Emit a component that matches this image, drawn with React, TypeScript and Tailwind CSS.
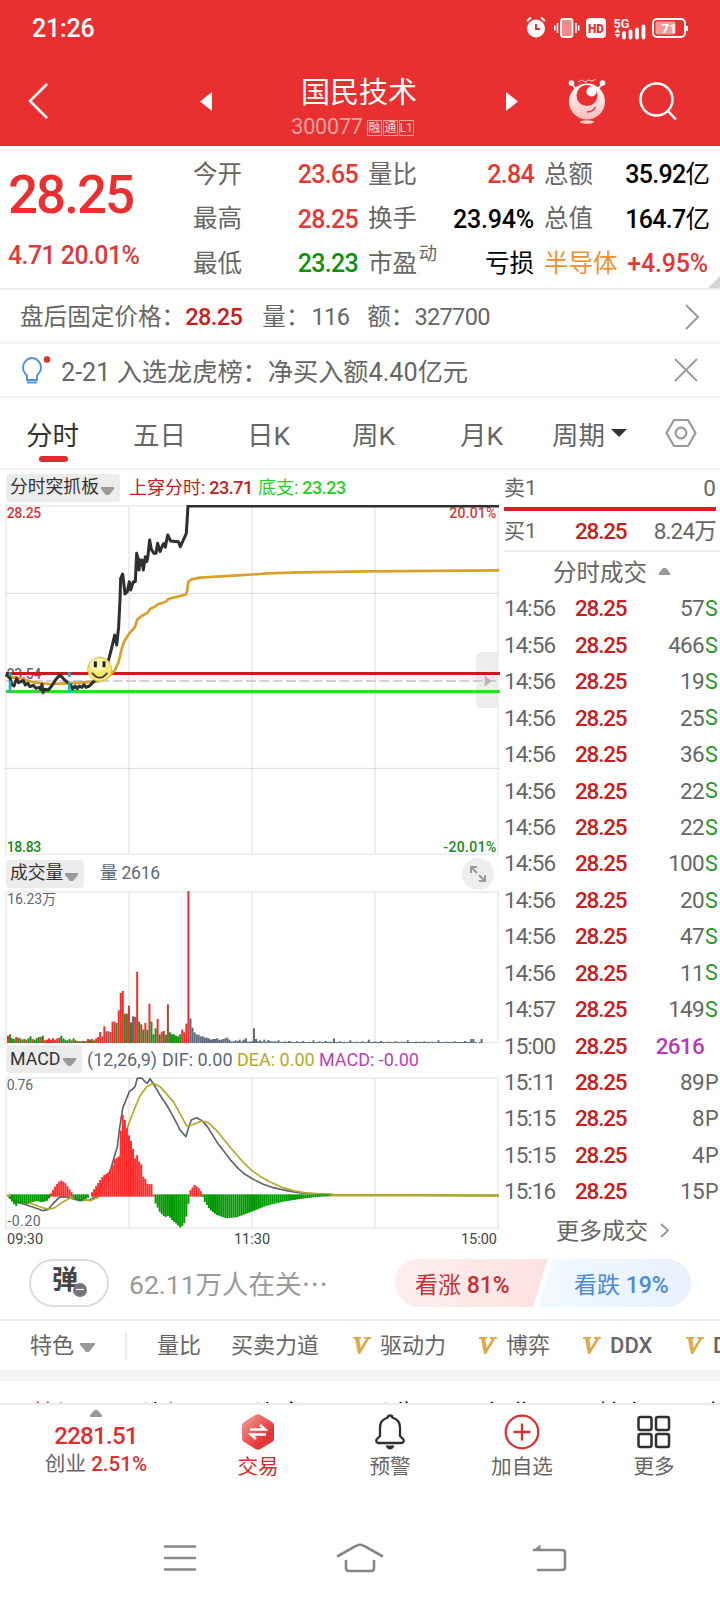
import type { ReactNode } from 'react'
import clsx from 'clsx'

type Point = [number, number]

interface Quote {
    label: string
    value: string
    unit?: string
    valueClass: string
    labelClass?: string
    sup?: string
}

interface Trade {
    time: string
    volume: string
    side: string
}

const quoteColumns: Quote[][] = [
    [
        { label: '今开', value: '23.65', valueClass: 'text-[#e23838]' },
        { label: '最高', value: '28.25', valueClass: 'text-[#e23838]' },
        { label: '最低', value: '23.23', valueClass: 'text-[#0c930c]' },
    ],
    [
        { label: '量比', value: '2.84', valueClass: 'text-[#e23838]' },
        { label: '换手', value: '23.94%', valueClass: 'text-black' },
        { label: '市盈', value: '', unit: '亏损', valueClass: 'text-black', sup: '动' },
    ],
    [
        { label: '总额', value: '35.92', unit: '亿', valueClass: 'text-black' },
        { label: '总值', value: '164.7', unit: '亿', valueClass: 'text-black' },
        { label: '半导体', value: '+4.95%', valueClass: 'text-[#e23838] pr-0.5', labelClass: 'text-[#f0902c]' },
    ],
]

const trades: Trade[] = [
    { time: '14:56', volume: '57', side: 'S' },
    { time: '14:56', volume: '466', side: 'S' },
    { time: '14:56', volume: '19', side: 'S' },
    { time: '14:56', volume: '25', side: 'S' },
    { time: '14:56', volume: '36', side: 'S' },
    { time: '14:56', volume: '22', side: 'S' },
    { time: '14:56', volume: '22', side: 'S' },
    { time: '14:56', volume: '100', side: 'S' },
    { time: '14:56', volume: '20', side: 'S' },
    { time: '14:56', volume: '47', side: 'S' },
    { time: '14:56', volume: '11', side: 'S' },
    { time: '14:57', volume: '149', side: 'S' },
    { time: '15:00', volume: '2616', side: '' },
    { time: '15:11', volume: '89', side: 'P' },
    { time: '15:15', volume: '8', side: 'P' },
    { time: '15:15', volume: '4', side: 'P' },
    { time: '15:16', volume: '15', side: 'P' },
]

// Charts are drawn in units of a third of a pixel
const PRICE_LINE = '18,560 24,550 30,565 36,585 42,588 50,565 56,578 70,572 76,585 84,580 90,590 100,586 108,595 118,592 122,598 126,583 129,608 135,598 145,600 155,588 168,568 180,555 192,568 200,575 212,585 218,597 225,588 232,596 238,588 246,592 252,584 258,592 268,588 276,580 284,572 292,560 300,505 310,530 325,512 334,478 344,435 350,465 356,410 360,330 362,265 368,252 372,285 375,312 382,305 388,275 392,300 400,275 406,275 410,190 414,205 417,240 420,210 424,225 426,210 430,240 436,200 440,215 443,205 449,150 454,178 462,190 468,190 473,160 480,185 488,165 492,160 496,172 503,135 512,153 535,155 541,170 550,150 559,130 564,48 1497,48'
const AVERAGE_LINE = '18,558 60,565 100,577 150,582 200,580 240,578 290,575 320,565 345,540 356,515 364,480 372,455 388,430 404,412 412,388 425,378 443,368 450,357 465,350 473,343 498,335 505,327 545,317 558,313 562,300 565,275 575,268 600,263 700,257 780,252 800,250 900,247 1100,244 1497,241'
const DIF_LINE = '24,468 45,485 70,492 100,502 130,512 145,508 160,490 178,472 195,470 215,475 240,482 270,480 290,468 310,425 330,395 340,360 352,320 358,270 368,205 388,155 400,145 405,140 412,115 425,114 432,122 442,130 450,116 458,128 480,165 500,195 520,230 540,270 558,290 566,262 574,240 590,233 606,242 622,260 650,305 690,358 715,386 735,403 760,418 790,433 820,443 860,452 900,459 1000,464 1497,467'
const DEA_LINE = '24,467 60,487 95,491 130,504 150,507 165,503 185,488 215,472 240,478 270,482 295,472 320,430 350,390 370,310 384,258 400,215 420,168 440,140 460,130 480,140 520,185 545,230 560,258 575,255 605,243 625,248 650,272 700,333 730,367 755,391 780,409 810,426 850,443 880,452 920,459 1000,464 1497,467'

const VOLUMES = '22r 26g 14g 12g 18r 16g 14r 10g 12g 10r 14g 20g 12r 10g 15g 18g 18r 22g 8r 10r 14r 10r 14r 10r 14r 16r 22g 14g 10g 8g 12g 8r 14g 8g 6r 5g 6r 6g 6r 12r 10g 12r 8g 14r 18r 33r 20r 50r 35r 35s 33r 64r 64r 60g 98r 150r 156r 88g 88d 112r 62g 80s 78r 214r 64g 56r 40g 60r 40g 118r 64g 26g 44g 72r 26g 34r 36d 25g 116d 32g 26g 26g 22g 20g 26g 40r 32r 58r 456r 74s 46s 32s 26s 24s 20s 20s 16s 16s 14s 10s 12s 12s 14s 10s 10s 12s 14s 16s 10s 5s 5s 8s 6s 10s 5s 10s 14s 4s 4s 5s 44s 12s 5s 8s 4s 10s 4s 9s 6s 4s 5s 4s 8s 3s 3s 5s 3s 6s 4s 3s 3s 5s 3s 3s 6s 3s 3s 4s 3s 8s 3s 3s 5s 3s 3s 6s 3s 4s 3s 14s 3s 3s 5s 3s 4s 3s 3s 8s 3s 3s 4s 3s 3s 5s 3s 3s 10s 3s 3s 4s 3s 3s 6s 3s 3s 3s 4s 3s 3s 5s 3s 3s 4s 3s 3s 8s 3s 3s 3s 4s 3s 3s 3s 5s 3s 3s 3s 4s 3s 3s 8s 3s 3s 3s 4s 3s 3s 3s 5s 3s 3s 3s 3s 6s 3s 3s 12s 12s 3s 0s 3s 12s'.split(' ')

const BAR_COLORS: Record<string, string> = { r: '#f02f2f', g: '#169416', s: '#5b6b7b', d: '#a8483c' }

const MACD_ENVELOPE: Point[] = [
    [24, 0], [30, -10], [48, -32], [56, -22], [80, -24], [110, -16], [125, -20], [145, -14], [150, 0],
    [155, 10], [168, 30], [182, 46], [195, 38], [206, 22], [218, 5], [222, -10], [240, -16], [262, -8], [270, 0],
    [278, 12], [290, 30], [310, 60], [325, 68], [340, 95], [344, 110], [356, 115], [360, 170], [367, 245],
    [375, 225], [384, 188], [396, 155], [405, 110], [410, 125], [418, 100], [426, 90], [430, 55], [440, 45],
    [445, 20], [450, 40], [457, 30], [461, 0], [466, -22], [480, -50], [495, -65], [505, -60], [515, -72],
    [530, -85], [542, -97], [555, -80], [562, -50], [567, -10], [570, 14], [584, 32], [600, 18], [607, 0],
    [612, -15], [630, -42], [650, -58], [680, -68], [710, -65], [750, -50], [800, -30], [850, -18], [900, -10],
    [950, -4], [1000, -1], [1500, 0],
]

const macdAt = (x: number) => {
    const i = MACD_ENVELOPE.findIndex((p) => p[0] > x)
    if (i < 1) return 0
    const [x0, y0] = MACD_ENVELOPE[i - 1]
    const [x1, y1] = MACD_ENVELOPE[i]
    return y0 + ((y1 - y0) * (x - x0)) / (x1 - x0)
}

const macdBars: Point[] = Array.from({ length: 160 }, (_, i): Point => [24 + i * 6.15, macdAt(24 + i * 6.15)])

function Grid({ top, bottom, rows = [] }: { top: number; bottom: number; rows?: number[] }) {
    return (
        <g>
            <g stroke="#ebebeb" strokeWidth="5" fill="none">
                <rect x="18" y={top} width="1476" height={bottom - top} />
                {[387, 756, 1125].map((x) => <path key={x} d={`M${x} ${top}V${bottom}`} />)}
            </g>
            {rows.map((y) => <path key={y} d={`M18 ${y}H1494`} stroke="#d8d8d8" strokeWidth="3" />)}
        </g>
    )
}

function PriceChart() {
    return (
        <svg className="block h-[350px] w-[500px]" viewBox="0 45 1500 1050" fill="none">
            <Grid top={48} bottom={1093} rows={[310, 835]} />
            <path d="M1494 486h-48q-18 0-18 18v132q0 18 18 18h48z" fill="#eeeeee" />
            <g fontSize="42" fontFamily="Roboto" fontWeight="500">
                <text x="20" y="84" fill="#d23a3a" textLength="104">28.25</text>
                <text x="1348" y="84" fill="#d23a3a" textLength="141">20.01%</text>
                <text x="20" y="1087" fill="#1b8a1b" textLength="104">18.83</text>
                <text x="1330" y="1087" fill="#1b8a1b" textLength="159">-20.01%</text>
                <text x="20" y="566" fill="#5b6878" textLength="104">23.54</text>
            </g>
            <path d="M18 573H1494" stroke="#c4c4c4" strokeWidth="5" strokeDasharray="30 10" />
            <path d="M1454 556l20 17-20 17z" fill="#b5b5b5" />
            <path d="M18 550.500H1500" stroke="#c9191e" strokeWidth="9" />
            <path d="M18 604.500H1500" stroke="#2edc2e" strokeWidth="9" />
            <polyline points={AVERAGE_LINE} stroke="#dba02c" strokeWidth="8" strokeLinejoin="round" />
            <polyline points={PRICE_LINE} stroke="#2f2f2f" strokeWidth="9" strokeLinejoin="round" />
            <path d="M30 547v12M30 572v36M208 547v14M208 575v33" stroke="#2ab3b3" strokeWidth="8" />
            <circle cx="299" cy="538" r="36" fill="#f7e96a" stroke="#d8bf4e" strokeWidth="3" />
            <ellipse cx="296" cy="524" rx="26" ry="19" fill="#fdf7b4" />
            <path d="M286 514v18M312 514v18" stroke="#222" strokeWidth="9" />
            <path d="M276 548q23 30 46 0" stroke="#333" strokeWidth="5" />
        </svg>
    )
}

function VolumeChart() {
    return (
        <svg className="block h-[154px] w-[500px]" viewBox="0 180 1500 462">
            <Grid top={186} bottom={638} />
            {VOLUMES.map((bar, i) => {
                const h = parseInt(bar, 10)
                return <rect key={i} x={21 + i * 6.15} y={639 - h} width="6" height={h} fill={BAR_COLORS[bar.slice(-1)]} />
            })}
            <text x="22" y="223" fontSize="42" fontFamily="Roboto, 'Noto Sans CJK SC'" fill="#5b6878" textLength="146">16.23万</text>
        </svg>
    )
}

function MacdChart() {
    return (
        <svg className="block h-[154px] w-[500px]" viewBox="0 108 1500 462" fill="none">
            <Grid top={114} bottom={564} />
            <polyline points={DIF_LINE} stroke="#5d6670" strokeWidth="5" strokeLinejoin="round" />
            <polyline points={DEA_LINE} stroke="#b3a92b" strokeWidth="5" strokeLinejoin="round" />
            {macdBars.map(([x, h]) => (
                <rect
                    key={x}
                    x={x - 3}
                    y={h > 0 ? 466 - h : 463}
                    width="6"
                    height={Math.abs(h) + 4}
                    fill={h > 0 ? '#ff2a2a' : '#009a00'}
                    opacity={Math.abs(h) < 0.8 ? 0 : 1}
                />
            ))}
            <path d="M20 467H32M990 466H1497" stroke="#b3a92b" strokeWidth="7" />
            <g fontSize="42" fontFamily="Roboto" fill="#5b6878">
                <text x="20" y="150" textLength="79">0.76</text>
                <text x="22" y="558" textLength="100">-0.20</text>
            </g>
        </svg>
    )
}

function Pill({ children, className }: { children: ReactNode; className?: string }) {
    return (
        <div className={clsx('flex h-7 items-center justify-between rounded bg-[#ececec] pr-1.5 pl-1 text-[17.8px] text-[#333]', className)}>
            {children}
            <svg className="mt-1.5 h-2 w-[13px]" viewBox="0 0 13 8"><path d="M0 0h13v2L8 8H5L0 2z" fill="#9a9a9a" /></svg>
        </div>
    )
}

function StatusBar() {
    return (
        <div className="flex h-[58px] items-center justify-between pr-8 pl-8">
            <span className="text-[25px] font-medium tracking-[-0.2px]">21:26</span>
            <svg className="-mt-0.5" width="162" height="24" viewBox="0 0 162 24" fill="none">
                <circle cx="10" cy="12.500" r="9" fill="#fff" />
                <path d="M1 5l4-3.500M19 5l-4-3.500" stroke="#fff" strokeWidth="2" />
                <path d="M10 8v5h4" stroke="#e83030" strokeWidth="2" />
                <rect x="35" y="3" width="11.500" height="18" rx="2.500" fill="#f58a8a" stroke="#fff" strokeWidth="1.800" />
                <path d="M31.500 7v10M28.800 9.500v5M50 7v10M52.700 9.500v5" stroke="#fff" strokeWidth="1.600" />
                <rect x="60" y="2" width="20" height="20" rx="4" fill="#fff" />
                <text x="62" y="17" fontSize="13" fontWeight="900" fill="#e83030" fontFamily="Roboto" textLength="16" lengthAdjust="spacingAndGlyphs">HD</text>
                <text x="87.500" y="11.500" fontSize="13" fontWeight="600" fill="#fff" fontFamily="Roboto" textLength="16" lengthAdjust="spacingAndGlyphs">5G</text>
                <path d="M91.500 12.500l3 4h-6zM91.500 22l3-4h-6z" fill="#fff" />
                <path d="M98 17v4.500M104.500 15.500v6M111 13.500v8M117.500 10.500v11" stroke="#fff" strokeWidth="3.800" strokeLinecap="round" />
                <rect x="127" y="3" width="32" height="18" rx="4" stroke="#fff" strokeWidth="2" />
                <rect x="129.500" y="5.500" width="20" height="13" rx="2" fill="#f69a9a" />
                <path d="M161 10v5" stroke="#fff" strokeWidth="2" />
                <text x="135.500" y="17" fontSize="13.500" fontWeight="800" fill="#fff" fontFamily="Roboto">71</text>
            </svg>
        </div>
    )
}

function Header() {
    return (
        <header className="h-[146px] bg-[#e83030] text-white">
            <StatusBar />
            <div className="flex h-[86px] items-center">
                <svg className="ml-7 h-9 w-5" viewBox="0 0 20 36" fill="none"><path d="M19 1L2 18l17 17" stroke="#fff" strokeWidth="2.500" /></svg>
                <svg className="ml-[152px] h-[19px] w-3" viewBox="0 0 12 19"><path d="M12 0v19L0 9.500z" fill="#fff" /></svg>
                <div className="flex w-[294px] flex-col items-center self-start pt-4">
                    <div className="h-[38px] text-[29px] leading-[38px]">国民技术</div>
                    <div className="mt-[3px] mr-[13px] flex h-6 items-center text-[21.5px] leading-6 tracking-[-0.2px] text-[#f7a0a0]">
                        <span>300077</span>
                        <span className="mt-0.5 ml-1 flex gap-px text-[12px] leading-[14px] text-[#fdd]">
                            {['融', '通', 'L1'].map((tag) => (
                                <span key={tag} className="h-4 w-[15px] border border-[#f7a0a0] text-center">{tag}</span>
                            ))}
                        </span>
                    </div>
                </div>
                <svg className="h-[19px] w-3" viewBox="0 0 12 19"><path d="M0 0v19l12-9.500z" fill="#fff" /></svg>
                <svg className="ml-[50px] h-[46px] w-[38px]" viewBox="0 0 38 46" fill="none">
                    <defs>
                        <linearGradient id="mascot" x1="0" y1="0" x2="0" y2="1">
                            <stop offset="0" stopColor="#fff" />
                            <stop offset="1" stopColor="#fbb" />
                        </linearGradient>
                    </defs>
                    <path d="M3 5l5 6M35 5l-5 6" stroke="#fff" strokeWidth="1.800" />
                    <circle cx="3.500" cy="5" r="2.800" fill="#fff" />
                    <circle cx="34.500" cy="5" r="2.800" fill="#fff" />
                    <path d="M10 4l4-2 3 2 4-2 3 1 4-2" stroke="#fcc" strokeWidth="1" />
                    <ellipse cx="19" cy="23.500" rx="18" ry="18" fill="url(#mascot)" />
                    <circle cx="19" cy="17.500" r="10.500" fill="#e83030" />
                    <circle cx="23.500" cy="13.500" r="5" fill="#fff" />
                    <path d="M19 34q6 0 8.500-5" stroke="#e83030" strokeWidth="1.500" />
                    <ellipse cx="19" cy="44" rx="7" ry="1.800" fill="#fcc" />
                </svg>
                <svg className="ml-[33px] h-[38px] w-[38px]" viewBox="0 0 38 38" fill="none">
                    <circle cx="17.500" cy="17.500" r="16" stroke="#fff" strokeWidth="2.500" />
                    <path d="M28.500 28.500l8.500 9" stroke="#fff" strokeWidth="2.500" />
                </svg>
            </div>
        </header>
    )
}

function QuotePanel() {
    return (
        <section className="relative flex h-[144px] border-b-2 border-[#ececec]">
            <div className="w-[193px] pl-[8px] text-[#e83030]">
                <div className="mt-[19px] h-[60px] text-[53px] leading-[60px] font-medium tracking-[-2px]">28.25</div>
                <div className="mt-[15px] text-[25px] leading-8 font-medium tracking-[-0.6px] text-[#dc3a3a]">4.71 20.01%</div>
            </div>
            <div className="grid grid-cols-[165px_166px_166px] gap-x-[10px]">
                {quoteColumns.map((column, i) => (
                    <div key={i} className="pt-[7px]">
                        {column.map((item) => (
                            <div key={item.label} className="flex h-[44.500px] items-center justify-between text-[24.5px]">
                                <span className={clsx('whitespace-nowrap', item.labelClass || 'text-[#666]')}>
                                    {item.label}
                                    {item.sup && <sup className="-top-3 ml-0.5 text-[18px]">{item.sup}</sup>}
                                </span>
                                <span className={clsx('whitespace-nowrap', item.valueClass)}>
                                    <span className={clsx('text-[25px] font-medium', item.value.endsWith('%') ? 'tracking-[-0.2px]' : 'tracking-[-0.7px]')}>{item.value}</span>
                                    {item.unit}
                                </span>
                            </div>
                        ))}
                    </div>
                ))}
            </div>
            <svg className="absolute right-0 bottom-0 h-3 w-3" viewBox="0 0 12 12"><path d="M12 0v12H0z" fill="#d5d5d5" /></svg>
        </section>
    )
}

function NoticeRows() {
    return (
        <>
            <div className="flex h-[54px] items-center border-b-2 border-[#f3f3f3] pt-1 pr-5 pl-5 text-[23.6px] text-[#666]">
                <span>盘后固定价格：</span>
                <span className="font-medium tracking-[-0.6px] text-[#c8201e]">28.25</span>
                <span className="ml-[20px]">量：</span>
                <span className="ml-0.5 tracking-[-0.7px]">116</span>
                <span className="ml-[18px]">额：</span>
                <span className="tracking-[-0.7px]">327700</span>
                <svg className="-mt-0.5 ml-auto h-[26px] w-[15px]" viewBox="0 0 15 26" fill="none"><path d="M1 1l12 12L1 25" stroke="#999" strokeWidth="2" /></svg>
            </div>
            <div className="flex h-[54px] items-center border-b-2 border-[#f3f3f3] pr-[22px] pl-[22px] text-[25.2px] text-[#666]">
                <svg className="h-[30px] w-[30px]" viewBox="0 0 30 30" fill="none">
                    <path d="M5 20.500C2.500 18 1 15.500 1 12.500a9 9.500 0 0118 0c0 3-1.500 5.500-4 8V25H5z" stroke="#4a8fdc" strokeWidth="1.800" />
                    <path d="M5 27.500h10" stroke="#4a8fdc" strokeWidth="1.800" />
                    <circle cx="25" cy="4.500" r="3.300" fill="#d93030" />
                </svg>
                <span className="mt-1.5 ml-[9px] whitespace-nowrap">2-21 入选龙虎榜：净买入额4.40亿元</span>
                <svg className="ml-auto h-6 w-6" viewBox="0 0 24 24" fill="none"><path d="M1 1l22 22M23 1L1 23" stroke="#999" strokeWidth="1.800" /></svg>
            </div>
        </>
    )
}

function ChartTabs() {
    return (
        <nav className="flex h-[72px] items-center border-b-2 border-[#f3f3f3] pt-1.5 pl-[26px] text-[26.5px] text-[#666]">
            <div className="relative w-[107px] text-[#333]">
                分时
                <span className="absolute -bottom-[6px] left-[13px] h-1.5 w-[29px] rounded-full bg-[#d93030]" />
            </div>
            <span className="w-[114px]">五日</span>
            <span className="w-[105px]">日K</span>
            <span className="w-[108px]">周K</span>
            <span className="w-[92px]">月K</span>
            <span>周期</span>
            <svg className="-mt-1.5 ml-[6px] h-2 w-4" viewBox="0 0 16 8"><path d="M0 0h16L8 8z" fill="#333" /></svg>
            <svg className="-mt-1.5 ml-[38px] h-[30px] w-8" viewBox="0 0 32 30" fill="none" stroke="#999" strokeWidth="2.200">
                <path d="M9 2h14l7.500 13L23 28H9L1.500 15z" strokeLinejoin="round" />
                <circle cx="16" cy="15" r="5.300" />
            </svg>
        </nav>
    )
}

function ChartColumn() {
    return (
        <div className="w-[500px]">
            <div className="flex h-[35px] items-center pl-1.5 text-[18px]">
                <Pill className="w-[114px]">分时突抓板</Pill>
                <span className="ml-[9px] w-[129px] whitespace-nowrap text-[#c02020]">上穿分时:<b className="ml-1 font-medium tracking-[-0.5px]">23.71</b></span>
                <span className="text-[#23d023]">底支:<b className="ml-1 font-medium tracking-[-0.5px]">23.23</b></span>
            </div>
            <PriceChart />
            <div className="flex h-[35px] items-center pt-0.5 pr-[6px] pl-1.5">
                <Pill className="w-[78px]">成交量</Pill>
                <span className="ml-4 text-[17.5px] tracking-[-0.2px] text-[#5b6878]">量 2616</span>
                <svg className="ml-auto h-8 w-8" viewBox="0 0 32 32" fill="none">
                    <circle cx="16" cy="16" r="16" fill="#eee" />
                    <path d="M9 15V9h6M9 9l6 6M23 17v6h-6M23 23l-6-6" stroke="#999" strokeWidth="2" />
                </svg>
            </div>
            <VolumeChart />
            <div className="flex h-8 items-center pb-0.5 pl-1.5 text-[18px]">
                <Pill className="w-[76px]">MACD</Pill>
                <span className="ml-[5px] w-[75px] text-[#5b6878]">(12,26,9)</span>
                <span className="w-[75px] text-[#5b6878]">DIF: 0.00</span>
                <span className="w-[82px] text-[#b3a92b]">DEA: 0.00</span>
                <span className="text-[#bb3fbb]">MACD: -0.00</span>
            </div>
            <MacdChart />
            <div className="flex h-[18px] items-center justify-between pt-0.5 pr-[3px] pl-[7px] text-[14.5px] text-[#444]">
                <span>09:30</span>
                <span>11:30</span>
                <span>15:00</span>
            </div>
        </div>
    )
}

function TradeColumn() {
    return (
        <div className="w-[220px] pl-1 text-[22.5px] text-[#666]">
            <div className="flex h-[37px] items-center justify-between pr-1">
                <span className="text-[21px]">卖1</span>
                <span>0</span>
            </div>
            <div className="mr-1 h-1 bg-[#d42020]" />
            <div className="flex h-[41px] items-center border-b-2 border-[#ececec] pt-[3px]">
                <span className="w-[71px] text-[21px]">买1</span>
                <span className="font-medium tracking-[-1.2px] text-[#c8201e]">28.25</span>
                <span className="ml-auto pr-1 tracking-[-0.8px]">8.24万</span>
            </div>
            <div className="flex h-[39px] items-center pt-1 pl-[49px] text-[23.5px]">
                分时成交
                <svg className="mb-1 ml-3 h-[7px] w-[11px]" viewBox="0 0 11 7"><path d="M4 0h3l4 5v2H0V5z" fill="#999" /></svg>
            </div>
            {trades.map((trade, i) => (
                <div key={i} className="flex h-[36.450px] items-center pr-px tracking-[-1px]">
                    <span className="w-[71px]">{trade.time}</span>
                    <span className="font-medium tracking-[-1.2px] text-[#c8201e]">28.25</span>
                    <span className={clsx('ml-auto tracking-[-0.7px]', !trade.side && 'font-medium text-[#b93ab9]')}>{trade.volume}</span>
                    <span className={clsx('w-[15px] pl-px text-[21.5px]', trade.side === 'S' && 'text-[#2a962a]')}>{trade.side}</span>
                </div>
            ))}
            <div className="flex h-[38px] items-center pt-1.5 pl-[52px] text-[23px]">
                更多成交
                <svg className="-mt-1 ml-3 h-[15px] w-[9px]" viewBox="0 0 9 15" fill="none"><path d="M1 1l7 6.500L1 14" stroke="#999" strokeWidth="2" /></svg>
            </div>
        </div>
    )
}

function SentimentRow() {
    return (
        <div className="flex h-[75px] items-center border-b-2 border-[#ececec] pl-[29px]">
            <div className="relative flex h-12 w-20 items-center justify-center rounded-full border-2 border-[#dcdcdc] pr-2 text-[26px] font-bold text-[#444]">
                <span className="-mt-1">弹</span>
                <span className="absolute top-[22px] left-[42px] flex h-[14px] w-[14px] items-center justify-center rounded-full bg-[#777]">
                    <span className="h-[1.5px] w-2 bg-white" />
                </span>
            </div>
            <span className="mt-1 ml-5 w-[266px] text-[26.5px] whitespace-nowrap text-[#999]">62.11万人在关⋯</span>
            <div className="relative flex h-12 w-[296px] items-center text-[23px]">
                <svg className="absolute inset-0" width="296" height="48" viewBox="0 0 296 48">
                    <defs>
                        <linearGradient id="bull"><stop offset="0" stopColor="#fdeeee" /><stop offset="1" stopColor="#fce2e2" /></linearGradient>
                        <linearGradient id="bear"><stop offset="0" stopColor="#f3f8ff" /><stop offset="1" stopColor="#e8f1fd" /></linearGradient>
                    </defs>
                    <path d="M24 0h129l-15 48H24a24 24 0 010-48z" fill="url(#bull)" />
                    <path d="M158 0h114a24 24 0 010 48H143z" fill="url(#bear)" />
                </svg>
                <span className="relative mt-2 ml-5 w-[159px] text-[#c93030]">看涨 <b className="font-medium">81%</b></span>
                <span className="relative mt-2 text-[#4a8ad8]">看跌 <b className="font-medium">19%</b></span>
            </div>
        </div>
    )
}

function VipMark() {
    return (
        <svg className="mr-[9px] h-[17px] w-[18px] flex-none" viewBox="0 0 18 17">
            <path d="M0 0h8v1.500L6.500 2l1 9L13 2l-2-.5V0h7v1.500l-2 .5-9 15H5L2 2 0 1.500z" fill="#e0a94a" />
        </svg>
    )
}

function FeatureRow() {
    return (
        <div className="flex h-[49px] items-center overflow-hidden pl-[30px] text-[22px] whitespace-nowrap text-[#666]">
            <span className="flex-none">特色</span>
            <svg className="mt-1 ml-1.5 h-[9px] w-[15px] flex-none" viewBox="0 0 15 9"><path d="M0 0h15v1.500L9 9H6L0 1.500z" fill="#999" /></svg>
            <span className="mr-[30px] ml-[30px] h-7 w-0.5 flex-none bg-[#ececec]" />
            <span className="w-[74px] flex-none">量比</span>
            <span className="w-[122px] flex-none">买卖力道</span>
            <span className="flex w-[126px] flex-none items-center"><VipMark />驱动力</span>
            <span className="flex w-[104px] flex-none items-center"><VipMark />博弈</span>
            <span className="flex w-[103px] flex-none items-center font-medium"><VipMark />DDX</span>
            <span className="flex flex-none items-center font-medium"><VipMark />DDY</span>
        </div>
    )
}

function InfoTabs() {
    return (
        <div className="flex h-[22px] overflow-hidden pt-[18.500px] pl-[33px] text-[24px] leading-7 whitespace-nowrap text-black">
            <span className="w-[110px] flex-none text-[#c93030]">快讯</span>
            <span className="w-[112px] flex-none">资讯</span>
            <span className="w-[115px] flex-none">资金</span>
            <span className="w-[115px] flex-none">公告</span>
            <span className="w-[113px] flex-none">行业</span>
            <span className="w-[110px] flex-none">持仓</span>
            <span className="flex-none">技术</span>
        </div>
    )
}

function BottomItem({ label, icon, className }: { label: string; icon: ReactNode; className?: string }) {
    return (
        <div className={clsx('flex w-[132px] flex-col items-center pt-[9px]', className)}>
            {icon}
            <span className="leading-[34px]">{label}</span>
        </div>
    )
}

function BottomBar() {
    return (
        <footer className="flex h-[82px] border-t-2 border-[#ececec] text-[20.6px] text-[#666]">
            <div className="flex w-[192px] flex-col items-center pt-[5px]">
                <svg className="h-[7px] w-3 flex-none" viewBox="0 0 12 7"><path d="M4.500 0h3L12 5v2H0V5z" fill="#999" /></svg>
                <span className="mt-[4px] text-[24px] leading-[30px] font-medium tracking-[-0.7px] text-[#dc3030]">2281.51</span>
                <span className="leading-[27px]">创业 <span className="font-medium text-[#dc3030]">2.51%</span></span>
            </div>
            <BottomItem
                label="交易"
                className="text-[#c93030]"
                icon={
                    <svg className="h-9 w-[34px] flex-none" viewBox="0 0 34 36" fill="none">
                        <defs>
                            <linearGradient id="trade" x1="0" y1="0" x2="1" y2="1"><stop offset="0" stopColor="#f5a09a" /><stop offset=".7" stopColor="#e23636" /></linearGradient>
                        </defs>
                        <path d="M14.500 1q2.500-1.400 5 0l11.500 7q2 1.200 2 3.500v13q0 2.300-2 3.500L19.500 35q-2.500 1.400-5 0L3 28q-2-1.200-2-3.500v-13Q1 9.200 3 8z" fill="url(#trade)" />
                        <path d="M9 15.500h15l-5-4.500M25 20.500H10l5 4.500" stroke="#fff" strokeWidth="2.600" />
                    </svg>
                }
            />
            <BottomItem
                label="预警"
                icon={
                    <svg className="h-9 w-[32px] flex-none" viewBox="0 0 32 36" fill="none" stroke="#2f2f2f" strokeWidth="2.300">
                        <path d="M16 1.500c1.500 0 2.300 1 2.300 2C23 5 26 8.500 26 13.500v8.500l3.500 3.500q1 3-2 3.500h-23q-3-.5-2-3.500L6 22v-8.500C6 8.500 9 5 13.700 3.500c0-1 .8-2 2.300-2z" strokeLinejoin="round" />
                        <path d="M11.500 31.500h9q-1.500 4-4.500 4t-4.500-4z" fill="#2f2f2f" stroke="none" />
                    </svg>
                }
            />
            <BottomItem
                label="加自选"
                icon={
                    <svg className="h-9 w-9 flex-none" viewBox="0 0 36 36" fill="none" stroke="#d93030" strokeWidth="2.300">
                        <circle cx="18" cy="18" r="16.300" />
                        <path d="M9.500 18h17M18 9.500v17" />
                    </svg>
                }
            />
            <BottomItem
                label="更多"
                icon={
                    <svg className="h-9 w-[34px] flex-none" viewBox="0 0 34 36" fill="none" stroke="#2f2f2f" strokeWidth="2.500">
                        <rect x="1.500" y="3" width="13" height="13" rx="2" />
                        <rect x="19" y="3" width="13" height="13" rx="2" />
                        <rect x="1.500" y="20" width="13" height="13" rx="2" />
                        <rect x="19" y="20" width="13" height="13" rx="2" />
                    </svg>
                }
            />
        </footer>
    )
}

function SystemNav() {
    return (
        <div className="mt-[57px] flex h-8 items-center pl-[163px] text-[#878787]">
            <svg className="h-[28px] w-[34px]" viewBox="0 0 34 28" stroke="currentColor" strokeWidth="2.600" strokeLinecap="round"><path d="M2 2.500h30M2 14h30M2 25.500h30" /></svg>
            <svg className="ml-[139px] h-[30px] w-12" viewBox="0 0 48 30" fill="none" stroke="currentColor" strokeWidth="2.600" strokeLinecap="round">
                <path d="M2 13L20 3q4-2.500 8 0l18 10M10 18v7q0 3 3 3h22q3 0 3-3v-7" />
            </svg>
            <svg className="ml-[147px] h-[30px] w-9" viewBox="0 0 36 30" fill="none" stroke="currentColor" strokeWidth="2.600" strokeLinecap="round">
                <path d="M3 7h28q3 0 3 3v14q0 3-3 3H7" />
                <path d="M1.500 8L9.500 1.500V8z" fill="currentColor" stroke="none" />
            </svg>
        </div>
    )
}

export default function App() {
    return (
        <div className="h-[1600px] w-[720px] overflow-hidden bg-white [font-family:Roboto,'Noto_Sans_CJK_SC',sans-serif]">
            <Header />
            <QuotePanel />
            <NoticeRows />
            <ChartTabs />
            <main className="flex h-[776px]">
                <ChartColumn />
                <TradeColumn />
            </main>
            <SentimentRow />
            <FeatureRow />
            <div className="h-[11px] bg-[#f4f4f4]" />
            <InfoTabs />
            <BottomBar />
            <SystemNav />
        </div>
    )
}
